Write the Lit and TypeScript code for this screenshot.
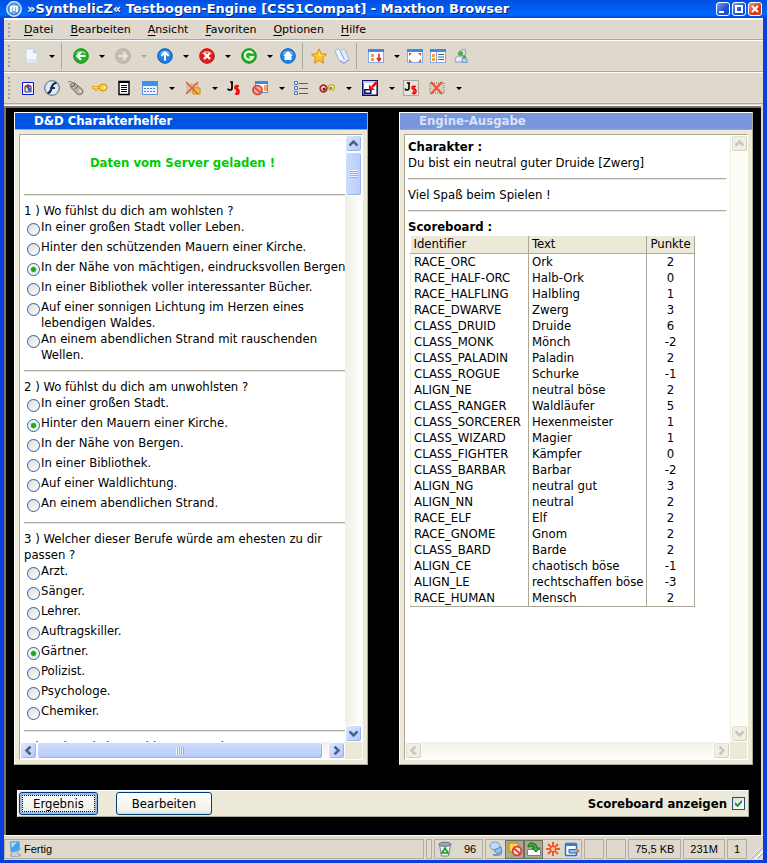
import { LitElement, html, css, svg, nothing } from "lit";
import { customElement, property, state } from "lit/decorators.js";
import { classMap } from "lit/directives/class-map.js";

const ICONS: Record<string, unknown> = {
  page: svg`<path d="M3 1h7l4 4v10H3z" fill="#f4f8fd" stroke="#c3d3ea"/><path d="M10 1v4h4z" fill="#b9cdec"/><path d="M4 11h9v4H4z" fill="#dde8f7"/>`,
  back: svg`<circle cx="8" cy="8" r="7.3" fill="#22b422" stroke="#168a1a"/><path d="M2.5 6a6 5 0 0 1 11 0q-5-2-11 0z" fill="#8be08b"/><path d="M12.5 8H4.500M8 4.200L4.200 8L8 11.800" fill="none" stroke="#fff" stroke-width="2"/>`,
  forward: svg`<circle cx="8" cy="8" r="7.3" fill="#c6bfb1" stroke="#b1aa9c"/><path d="M3.500 8h8M8 4.200L11.800 8L8 11.800" fill="none" stroke="#e9e5dc" stroke-width="2"/>`,
  up: svg`<circle cx="8" cy="8" r="7.3" fill="#1d7fe8" stroke="#1459b8"/><path d="M2.500 6a6 5 0 0 1 11 0q-5-2-11 0z" fill="#7db9f5"/><path d="M8 12.500V4.500M4.200 8L8 4.200L11.800 8" fill="none" stroke="#fff" stroke-width="2"/>`,
  stop: svg`<circle cx="8" cy="8" r="7.3" fill="#e31d1d" stroke="#b31313"/><path d="M2.500 6a6 5 0 0 1 11 0q-5-2-11 0z" fill="#f28a80"/><path d="M5 5l6 6M11 5l-6 6" stroke="#fff" stroke-width="2.400"/>`,
  refresh: svg`<circle cx="8" cy="8" r="7.3" fill="#22b422" stroke="#168a1a"/><path d="M2.500 6a6 5 0 0 1 11 0q-5-2-11 0z" fill="#7cdc7c"/><path d="M11.500 5.200A4.200 4.200 0 1 0 12 9H8.500" fill="none" stroke="#fff" stroke-width="2"/>`,
  home: svg`<circle cx="8" cy="8" r="7.3" fill="#1d85ea" stroke="#1260bd"/><path d="M2.500 6a6 5 0 0 1 11 0q-5-2-11 0z" fill="#86c2f8"/><path d="M8 3.200L13 8h-1.500v4h-7V8H3z" fill="#fff"/>`,
  star: svg`<path d="M8 .8l2.200 5 5.300.5-4 3.600 1.200 5.300L8 12.400l-4.700 2.800 1.200-5.300-4-3.600 5.300-.5z" fill="#ffc52a" stroke="#dc8a10"/><path d="M8 3l1.400 3.700 3 .3L8 8.500z" fill="#ffe98a"/>`,
  book: svg`<path d="M1 2.500l3.500-2 2 3 3-2.500 1.500 1 4 9.500-5 4-5-3z" fill="#e3edfa" stroke="#9cb5da"/><path d="M6.500 3.500l4 8M6 12.500l4 2.500 5-3.500" stroke="#7f9dcb" fill="none"/><path d="M3 3l4 8" stroke="#fff" stroke-width="1.500"/>`,
  sort: svg`<rect x=".5" y="1.500" width="15" height="13" fill="#fff" stroke="#88a9da"/><path d="M0 1h16v3H0z" fill="#3f87e8"/><path d="M3 6h3v3H3zM3 10h3v3H3z" fill="#f0a040"/><path d="M11 5.500V12M9 10l2 3 2-3" stroke="#d92020" stroke-width="1.500" fill="none"/>`,
  full: svg`<rect x=".5" y="1.500" width="15" height="13" fill="#fff" stroke="#88a9da"/><path d="M0 1h16v3H0z" fill="#3f87e8"/><path d="M2 5h3L2 8zM14 5h-3l3 3zM2 14h3l-3-3zM14 14h-3l3-3z" fill="#e04530"/>`,
  side: svg`<rect x=".5" y="1.500" width="15" height="13" fill="#fff" stroke="#88a9da"/><path d="M0 1h16v3H0z" fill="#3f87e8"/><path d="M2 6h3v3H2zM2 10h3v3H2z" fill="#f0a040"/><path d="M6.500 4v10" stroke="#7a9cd0"/><path d="M8 6.500h6M8 9h6M8 11.500h6" stroke="#4b5c78"/>`,
  people: svg`<path d="M5 6L8 2l4-1 1 5-3 2z" fill="#d4dbe6" stroke="#9aa7bb"/><circle cx="7.500" cy="5.500" r="2.600" fill="#54ad52"/><path d="M2 14q0-6 4-6t4 6z" fill="#e6eef8" stroke="#8ba1c1"/><path d="M9 14.500q0-5 2.500-5t3 5z" fill="#b7cdec" stroke="#7d98c4"/><circle cx="11.500" cy="9" r="1.800" fill="#4cab4f"/>`,
  frame: svg`<path d="M2.500 2.500h11v12h-11z" fill="#fff" stroke="#1010d8"/><path d="M5 6h6v6H5z" fill="#f8eaba" stroke="#333"/><path d="M5 6l3-2 3 2-3 3z" fill="#a02c78"/><path d="M8 8h3v3H8z" fill="#2869b6"/>`,
  flash: svg`<circle cx="8" cy="8" r="7.400" fill="#c9d5e2" stroke="#5b7390"/><circle cx="8" cy="8" r="5.900" fill="#e2ebf3"/><path d="M12.500 3Q8.500 3 7.500 8T3.500 13" fill="none" stroke="#142c4d" stroke-width="2.200"/><path d="M6.500 8H11" stroke="#142c4d" stroke-width="2"/>`,
  mouse: svg`<path d="M0 2q3-1.500 5 1" fill="none" stroke="#777"/><path d="M2 4.500l4-2 8 6.500q2 3 0 5-3 1.500-5 0L3 7.500z" fill="#b5b2a9" stroke="#79766e"/><path d="M3 7q4 0 4-4M7 9l3-3" fill="none" stroke="#65625c"/><path d="M11 10l2 2" stroke="#e5e2da" stroke-width="2"/>`,
  key: svg`<path d="M.5 6.500H8v2H5v2H3v-2H.5z" fill="#ffdc4a" stroke="#d59d16" stroke-width=".8"/><ellipse cx="11" cy="7.500" rx="4" ry="3.500" fill="#ffd23c" stroke="#c98f13"/><circle cx="12.500" cy="7.500" r="1" fill="#fff"/>`,
  text: svg`<path d="M3 1.500h10v13H3z" fill="#fff" stroke="#000" stroke-width="1.400"/><path d="M3 1h10v2H3z"/><path d="M5 5.500h6M5 7.500h6M5 9.500h6M5 11.500h6" stroke="#000"/>`,
  calendar: svg`<rect x=".5" y="1.500" width="15" height="13" fill="#e9f3ff" stroke="#5f96da"/><path d="M0 1h16v5H0z" fill="#3b92ea"/><path d="M2 8.500h12M2 11.500h12" stroke="#4c83c8" stroke-dasharray="2 1"/>`,
  nopic: svg`<path d="M2 4h11v8H2z" fill="#cbc7bd" stroke="#a6a298" stroke-dasharray="1 1"/><rect x="8" y="8" width="7" height="6" fill="#fbc338" stroke="#c58b18"/><path d="M1 2l12 12M13 2L1 14" stroke="#ef5a26" stroke-width="1.600"/>`,
  js: svg`<path d="M6 2v6q0 2-2 2T2 8.500M4 2h3" fill="none" stroke="#000" stroke-width="1.700"/><path d="M13 6q-4-1-4 1t2 2 2 3-4 1.500M11 5v10" fill="none" stroke="#f00" stroke-width="1.700"/>`,
  popup: svg`<rect x="3.500" y="1.500" width="12" height="11" fill="#fff" stroke="#5b8fda"/><path d="M3 1h13v3H3z" fill="#3f87e8"/><path d="M12 5h3v6h-3z" fill="#f7a54a"/><circle cx="5.500" cy="10" r="4.500" fill="#f1a39b" stroke="#d5402c" stroke-width="1.600"/><path d="M2.500 7.500l6 5" stroke="#d5402c" stroke-width="1.600"/>`,
  list: svg`<path d="M1.500 1.500h3v3h-3zM1.500 6.500h3v3h-3zM1.500 11.500h3v3h-3z" fill="#dce7f7" stroke="#5276b5"/><path d="M6 3.500h9M6 8.500h9M6 13.500h9" stroke="#4b5c80"/>`,
  glasses: svg`<circle cx="4.500" cy="8.500" r="3.300" fill="#eee" stroke="#b02424" stroke-width="1.800"/><circle cx="5" cy="9" r="1.500" fill="#522"/><circle cx="12.500" cy="7.500" r="2.800" fill="#f5f2c7" stroke="#c6bb32" stroke-width="1.500"/><circle cx="12" cy="8" r="1.200" fill="#775"/>`,
  shrink: svg`<path d="M.8.800h14.400v14.400H.8z" fill="#fff" stroke="#0b0b68" stroke-width="1.500"/><path d="M1 1h14v2H1z" fill="#b9cdec"/><path d="M2.800 9.800h6v3.500h-6z" fill="#fff" stroke="#0b0b68" stroke-width="1.500"/><path d="M15 2l-5 5" stroke="#f00" stroke-width="2.500"/><path d="M7 4.500V10h6z" fill="#f00"/>`,
  jsbox: svg`<path d="M.5.500h15v15H.5z" fill="#e8e4da" stroke="#aaa597"/><path d="M6 3v5q0 2-2 2T2.500 8.500M4 3h3" fill="none" stroke="#000" stroke-width="1.600"/><path d="M13 6.500q-4-1-4 1t2 1.500 2 2.500-4 1.500M11 5.500v9" fill="none" stroke="#f00" stroke-width="1.500"/>`,
  noimg: svg`<path d="M1 3h14v10H1z" fill="#d5d0c4" stroke="#77736b" stroke-dasharray="1 1"/><path d="M2 2l11 12M13 2L2 14" stroke="#f0502e" stroke-width="2"/>`,
  maxthon: svg`<circle cx="8" cy="8" r="7.200" fill="#3d85d8" stroke="#d8e8f8" stroke-width="1.500"/><circle cx="8" cy="8" r="5" fill="#72aeea"/><path d="M5 11V5.500h6V11M8 6v4" fill="none" stroke="#fff" stroke-width="1.700"/>`,
  computer: svg`<path d="M3 1l9-1 1 9-9 2z" fill="#3fa4f2" stroke="#8ca5c2"/><path d="M4 2l6-1-5 6z" fill="#a5dcff"/><path d="M5 11l5-1 1 3 3 1-4 2-7-1z" fill="#c9cfda" stroke="#8490a5" stroke-width=".7"/>`,
  bin: svg`<path d="M2.500 3.500h11l-2 11.500h-7z" fill="#eef4f8" stroke="#71808f"/><ellipse cx="8" cy="3.300" rx="6" ry="2" fill="#9fabb8" stroke="#5f6c7a"/><path d="M8 7l3 5H5z" fill="none" stroke="#179a1e" stroke-width="1.600"/>`,
  proxy: svg`<ellipse cx="7" cy="5" rx="5" ry="4" fill="#bcdcf7" stroke="#6b9bd0"/><path d="M6 9l7-3 1 5-5 2z" fill="#8fc0ef" stroke="#5684bd"/><path d="M5 13.500q5 2 9-1" fill="none" stroke="#6a8cb7" stroke-width="1.500"/>`,
  filter: svg`<path d="M2 2h9v9H2z" fill="#ffd143" stroke="#b98714"/><circle cx="10" cy="10" r="4.300" fill="#fbe7e1" stroke="#e03b23" stroke-width="1.800"/><path d="M7 7.500l6 5" stroke="#e03b23" stroke-width="1.800"/>`,
  photo: svg`<path d="M1.500 8.500h13v6h-13z" fill="#fff" stroke="#758092"/><path d="M2 6Q2 1 7 2q4 1 4 5h3l-4 4-4-4h2Q8 5 6 5z" fill="#35b231" stroke="#176b19"/>`,
  burst: svg`<path d="M8 1v14M1 8h14M3 3l10 10M13 3L3 13" stroke="#f0572a" stroke-width="2"/><circle cx="8" cy="8" r="2.500" fill="#ffd9a0" stroke="#e94820"/>`,
  edit: svg`<rect x="1.500" y="2.500" width="11" height="12" rx="1" fill="#fff" stroke="#2470cf" stroke-width="1.500"/><path d="M1 2h12v3H1z" fill="#2b80e5"/><path d="M5 8.500h7l3 1.500-3 2H5z" fill="#8cc3f5" stroke="#2b5fa8"/><path d="M12 8l3 2" stroke="#e9802b" stroke-width="2"/>`,
};

const icon = (name: string) =>
  html`<svg class="icon" viewBox="0 0 16 16" aria-hidden="true">${ICONS[name]}</svg>`;

interface Tool { icon?: string; label?: string; drop?: boolean; dim?: boolean; sep?: boolean }

const NAV: Tool[] = [
  { icon: "page", label: "Neu", drop: true }, { sep: true },
  { icon: "back", label: "Zurück", drop: true },
  { icon: "forward", label: "Vorwärts", drop: true, dim: true },
  { icon: "up", label: "Aufwärts", drop: true },
  { icon: "stop", label: "Stopp", drop: true },
  { icon: "refresh", label: "Aktualisieren", drop: true },
  { icon: "home", label: "Startseite" }, { sep: true },
  { icon: "star", label: "Favorit" }, { icon: "book", label: "Notizen" }, { sep: true },
  { icon: "sort", label: "Fenster", drop: true },
  { icon: "full", label: "Vollbild" }, { icon: "side", label: "Seitenleiste" }, { icon: "people", label: "Gruppen" },
];

const EXTRAS: Tool[] = [
  { icon: "frame", label: "Bilder" }, { icon: "flash", label: "Flash" }, { icon: "mouse", label: "Maus" },
  { icon: "key", label: "Passwörter" }, { icon: "text", label: "Quelltext" },
  { icon: "calendar", label: "Formulare", drop: true }, { icon: "nopic", label: "Inhalte sperren", drop: true },
  { icon: "js", label: "JavaScript" }, { icon: "popup", label: "Popups", drop: true },
  { icon: "list", label: "Liste" }, { icon: "glasses", label: "Ansehen", drop: true },
  { icon: "shrink", label: "Verkleinern", drop: true }, { icon: "jsbox", label: "Skripte" },
  { icon: "noimg", label: "Keine Bilder", drop: true },
];

const MENUS = ["Datei", "Bearbeiten", "Ansicht", "Favoriten", "Optionen", "Hilfe"];

const QUESTIONS = [
  { text: "Wo fühlst du dich am wohlsten ?", pick: 2, options: [
    "In einer großen Stadt voller Leben.", "Hinter den schützenden Mauern einer Kirche.",
    "In der Nähe von mächtigen, eindrucksvollen Bergen.", "In einer Bibliothek voller interessanter Bücher.",
    "Auf einer sonnigen Lichtung im Herzen eines lebendigen Waldes.",
    "An einem abendlichen Strand mit rauschenden Wellen."] },
  { text: "Wo fühlst du dich am unwohlsten ?", pick: 1, options: [
    "In einer großen Stadt.", "Hinter den Mauern einer Kirche.", "In der Nähe von Bergen.",
    "In einer Bibliothek.", "Auf einer Waldlichtung.", "An einem abendlichen Strand."] },
  { text: "Welcher dieser Berufe würde am ehesten zu dir passen ?", pick: 4, options: [
    "Arzt.", "Sänger.", "Lehrer.", "Auftragskiller.", "Gärtner.", "Polizist.", "Psychologe.", "Chemiker."] },
  { text: "Du hast keine Wahl, was tust du nun ?", pick: -1, options: [] as string[] },
];

const SCORES: [string, string, number][] = [
  ["RACE_ORC", "Ork", 2], ["RACE_HALF-ORC", "Halb-Ork", 0], ["RACE_HALFLING", "Halbling", 1],
  ["RACE_DWARVE", "Zwerg", 3], ["CLASS_DRUID", "Druide", 6], ["CLASS_MONK", "Mönch", -2],
  ["CLASS_PALADIN", "Paladin", 2], ["CLASS_ROGUE", "Schurke", -1], ["ALIGN_NE", "neutral böse", 2],
  ["CLASS_RANGER", "Waldläufer", 5], ["CLASS_SORCERER", "Hexenmeister", 1], ["CLASS_WIZARD", "Magier", 1],
  ["CLASS_FIGHTER", "Kämpfer", 0], ["CLASS_BARBAR", "Barbar", -2], ["ALIGN_NG", "neutral gut", 3],
  ["ALIGN_NN", "neutral", 2], ["RACE_ELF", "Elf", 2], ["RACE_GNOME", "Gnom", 2], ["CLASS_BARD", "Barde", 2],
  ["ALIGN_CE", "chaotisch böse", -1], ["ALIGN_LE", "rechtschaffen böse", -3], ["RACE_HUMAN", "Mensch", 2],
];

const shared = css`
  * { box-sizing: border-box; }
  button { font: inherit; color: inherit; padding: 0; border: 0; background: none; }
  .icon { display: block; width: 16px; height: 16px; flex: none; }
`;

@customElement("tool-strip")
export class ToolStrip extends LitElement {
  @property({ attribute: false }) tools: Tool[] = [];

  static styles = [shared, css`
    :host { display: flex; align-items: center; height: 100%; }
    .tool { display: flex; align-items: center; justify-content: center; width: var(--cell); height: 24px; }
    .group { display: flex; margin-left: var(--gap); }
    .drop { display: flex; align-items: center; justify-content: center; width: var(--drop); padding-left: 3px; }
    .arrow { width: 0; height: 0; border: 3px solid transparent; border-top-color: #000; border-bottom: 0; }
    .dim .arrow { border-top-color: #aaa496; }
    .sep { width: 1px; height: 26px; margin: 0 4px 0 3px; background: #aca899; }
  `];

  render() {
    return this.tools.map((t) => t.sep
      ? html`<span class="sep"></span>`
      : t.drop
        ? html`<span class=${classMap({ group: true, dim: !!t.dim })}>
            <button class="tool" aria-label=${t.label ?? ""}>${icon(t.icon!)}</button>
            <button class="drop" aria-label="${t.label} Auswahl"><span class="arrow"></span></button>
          </span>`
        : html`<button class="tool" aria-label=${t.label ?? ""}>${icon(t.icon!)}</button>`);
  }
}

@customElement("scroll-frame")
export class ScrollFrame extends LitElement {
  @property({ type: Boolean, reflect: true }) idle = false;

  static styles = [shared, css`
    :host {
      display: grid; grid-template: minmax(0, 1fr) 17px / minmax(0, 1fr) 17px;
      border: 1px solid #fff; border-top-color: #aca899; border-left-color: #aca899;
      background: #ece9d8; min-height: 0;
    }
    .view { background: #fff; overflow: hidden; padding: 4px 0 0 4px; }
    :host([idle]) .view { padding: 4px 4px 0 3px; }
    .bar { display: flex; background: linear-gradient(90deg, #f0efe8, #fefefb); }
    .vert { flex-direction: column; }
    .horiz { background: linear-gradient(#f0efe8, #fefefb); }
    .step, .thumb {
      display: flex; align-items: center; justify-content: center; flex: none;
      width: 17px; height: 17px; border: 1px solid #fff; border-radius: 3px;
      background: linear-gradient(135deg, #dbe6ff, #b4c8fb); box-shadow: inset -1px -1px #98b5e8;
    }
    .chev { width: 9px; height: 9px; fill: none; stroke: #4d6185; stroke-width: 2.5; }
    .vert .thumb { height: 44px; background: linear-gradient(90deg, #cddcfe, #b7cbfb); }
    .horiz .thumb { width: 286px; max-width: calc(100% - 34px); background: linear-gradient(#cddcfe, #b7cbfb); }
    .grip { width: 8px; height: 8px; background: repeating-linear-gradient(#eef4ff 0 1px, #8cb0f8 1px 2px); }
    .horiz .grip { background: repeating-linear-gradient(90deg, #eef4ff 0 1px, #8cb0f8 1px 2px); }
    .space { flex: 1; }
    :host([idle]) .step { background: #f0efe6; border-color: #fff; box-shadow: inset -1px -1px #d2cfc0, inset 1px 1px #e2e0d4; }
    :host([idle]) .chev { stroke: #c9c7ba; }
    :host([idle]) .vert { background: #fdfdf8; border-left: 1px solid #eeede5; }
  `];

  private step(label: string, d: string) {
    return html`<button class="step" aria-label=${label}><svg class="chev" viewBox="0 0 9 9"><path d=${d} /></svg></button>`;
  }

  private get thumb() {
    return this.idle ? nothing : html`<span class="thumb"><span class="grip"></span></span>`;
  }

  render() {
    return html`
      <div class="view"><slot></slot></div>
      <div class="bar vert">${this.step("Nach oben", "M.5 6.500l4-4 4 4")}${this.thumb}<span class="space"></span>${this.step("Nach unten", "M.5 2.500l4 4 4-4")}</div>
      <div class="bar horiz">${this.step("Nach links", "M6.500.5l-4 4 4 4")}${this.thumb}<span class="space"></span>${this.step("Nach rechts", "M2.500.5l4 4-4 4")}</div>`;
  }
}

@customElement("app-root")
export class AppRoot extends LitElement {
  @state() private picks = QUESTIONS.map((q) => q.pick);
  @state() private showScores = true;

  static styles = [shared, css`
    :host {
      --ui: "DejaVu Sans Condensed", "DejaVu Sans", sans-serif;
      display: flex; flex-direction: column; height: 100vh; color: #000;
      font: 13px/16px var(--ui);
      border: solid #0a3fdc; border-width: 0 4px 3px;
      background: #dfd8cc;
      box-sizing: border-box;
    }
    .title {
      display: flex; align-items: center; gap: 5px; flex: none; height: 18px;
      margin: 0 -4px; padding: 0 5px 1px 6px;
      background: linear-gradient(#0050e0, #0066ff 80%, #0048d8); color: #fff;
    }
    .title h1 { flex: 1; margin: 0; font: bold 13px/16px "DejaVu Sans", sans-serif; text-shadow: 1px 1px #0a1f80; white-space: nowrap; }
    .caption { display: flex; gap: 2px; }
    .cap { display: flex; align-items: center; justify-content: center; width: 14px; height: 14px; border: 1px solid #fff; border-radius: 3px; background: linear-gradient(135deg, #7e9ff0, #1c4ed2 60%); }
    .cap.close { background: linear-gradient(135deg, #f09b80, #d53c14 60%); }
    .cap svg { width: 10px; height: 10px; fill: none; stroke: #fff; stroke-width: 2; }
    .band { display: flex; align-items: center; flex: none; height: 32px; border-top: 1px solid #fff; border-bottom: 1px solid #aca899; padding-left: 4px; }
    .menu { height: 22px; border-top: 2px solid #fff; }
    .nav { --cell: 23px; --drop: 16px; --gap: 3px; }
    .extra { --cell: 24px; --drop: 17px; --gap: 2px; }
    .grip { width: 2px; height: 23px; background: repeating-linear-gradient(#aaa597 0 2px, transparent 2px 4px); }
    .menu .grip { height: 14px; }
    .band tool-strip { margin-left: 6px; }
    nav { display: flex; gap: 17px; margin-left: 14px; font: 11px/16px "DejaVu Sans", sans-serif; }
    nav u { text-underline-offset: 2px; }
    .stage {
      display: flex; flex-direction: column; flex: 1; min-height: 0; background: #000;
      border: 2px solid #77746a; border-width: 2px 0 0 2px; box-shadow: 0 -1px #fff;
      margin: 2px 2px 0 0; padding: 4px 8px 18px;
    }
    .panels { display: grid; grid-template-columns: 1fr 1fr; gap: 31px; flex: 1; min-height: 0; grid-template-rows: minmax(0, 1fr); }
    .panel {
      display: flex; flex-direction: column; min-width: 0; background: #ece9d8;
      border: 1px solid #fff; border-right-color: #aca899; border-bottom-color: #aca899;
    }
    .panel h2 { flex: none; margin: 0; height: 17px; padding-left: 19px; background: #0054e3; color: #fff; font: bold 13px/16px var(--ui); border-bottom: 1px solid #aca899; }
    .panel.quiet h2 { background: #7a96df; color: #d8e4f8; }
    .panel scroll-frame { flex: 1; margin: 4px; }
    .notice { margin: 0; padding: 16px 4px 16px 0; text-align: center; font-weight: bold; color: #0c0; }
    hr { margin: 7px 0; height: 2px; border: 0; border-top: 1px solid #aca899; background: #ece9d8; }
    fieldset { margin: 0; padding: 0; border: 0; min-width: 0; }
    legend { padding: 0; }
    .option { display: flex; min-height: 20px; margin-right: -6px; padding-left: 3px; gap: 1px; }
    input[type="radio"] {
      appearance: none; flex: none; width: 13px; height: 13px; margin: 4px 0 0; border: 1px solid #32608f; border-radius: 50%;
      background: linear-gradient(135deg, #dcdcd7, #fff);
    }
    input[type="radio"]:checked { background: radial-gradient(circle, #22a322 0 2px, #c4e6c4 3px, #f4f4f1 4px); }
    p { margin: 0; }
    table { border-collapse: collapse; margin: 1px 0 0 2px; }
    th { font-weight: normal; text-align: left; background: #ece9d8; height: 17px; border-bottom: 1px solid #aca899; }
    th, td { padding: 0 2px 0 3px; border-right: 1px solid #aca899; white-space: nowrap; }
    td { height: 16px; border-left: 1px solid #ece9d8; }
    tbody tr:last-child td { border-bottom: 1px solid #aca899; }
    th:nth-child(1), th:nth-child(2) { width: 118px; }
    th:nth-child(3) { width: 48px; }
    th:nth-child(3), td:nth-child(3) { padding: 0 2px; text-align: center; }
    .actions {
      display: flex; align-items: center; flex: none; height: 27px; margin: 25px 4px 0 3px; padding: 0 3px 0 1px;
      background: #ece9d8; border: 1px solid #aca899; border-top-color: #fff; border-left-color: #fff;
    }
    .push { height: 23px; border: 1px solid #003c74; border-radius: 3px; background: linear-gradient(#fff, #f0f0ea 85%, #dcd8cc); }
    .push + .push { margin-left: 18px; padding: 0 15px; }
    .push.default { box-shadow: inset 0 0 0 2px #9db9eb; padding: 0 2px; }
    .push.default span { display: block; padding: 0 10px; border: 1px dotted #000; line-height: 15px; }
    .check { display: flex; align-items: center; gap: 5px; margin-left: auto; font-weight: bold; }
    input[type="checkbox"] { appearance: none; width: 13px; height: 13px; margin: 0; border: 1px solid #1c5180; background: linear-gradient(135deg, #dcdcd7, #fff); }
    input[type="checkbox"]:checked::before { content: ""; display: block; width: 11px; height: 11px; background: #21a121; clip-path: polygon(18% 36%, 42% 56%, 82% 14%, 82% 42%, 42% 84%, 18% 62%); }
    .status { display: flex; gap: 2px; flex: none; height: 25px; padding: 3px 0 1px; border-top: 1px solid #fff; font: 11px/16px "Liberation Sans", sans-serif; }
    .cell { display: flex; align-items: center; justify-content: center; border: 1px solid #b3ad9f; padding: 0 6px; }
    .cell.main { flex: 1; justify-content: flex-start; gap: 1px; padding: 0 2px; }
    .cell.slim { width: 6px; padding: 0; }
    .cell.blank { width: 20px; padding: 0; }
    .cell.count { gap: 11px; padding: 0 6px 0 2px; }
    .cell.icons { padding: 0; }
    .flag { display: flex; align-items: center; justify-content: center; width: 19px; height: 19px; }
    .flag.on { background: #a9a892; border: 1px solid #6f6d5c; }
    .size { width: 14px; align-self: end; height: 14px; background: repeating-linear-gradient(135deg, transparent 0 2px, #fff 2px 3px, #a39d8f 3px 4px); clip-path: polygon(100% 0, 100% 100%, 0 100%); }
  `];

  private pick(q: number, o: number) {
    this.picks = this.picks.map((p, i) => (i === q ? o : p));
  }

  private question(q: (typeof QUESTIONS)[number], i: number) {
    return html`<hr />
      <fieldset>
        <legend>${`${i + 1} ) ${q.text}`}</legend>
        ${q.options.map((text, o) => html`<label class="option">
          <input type="radio" name="q${i}" .checked=${this.picks[i] === o} @change=${() => this.pick(i, o)} />
          <span>${text}</span></label>`)}
      </fieldset>`;
  }

  render() {
    return html`
      <header class="title">
        ${icon("maxthon")}
        <h1>»SynthelicZ« Testbogen-Engine [CSS1Compat] - Maxthon Browser</h1>
        <div class="caption">
          <button class="cap" aria-label="Minimieren"><svg viewBox="0 0 10 10"><path d="M1 8h5" /></svg></button>
          <button class="cap" aria-label="Maximieren"><svg viewBox="0 0 10 10"><path d="M2 2h6v6H2z" /></svg></button>
          <button class="cap close" aria-label="Schließen"><svg viewBox="0 0 10 10"><path d="M2 2l6 6M8 2L2 8" /></svg></button>
        </div>
      </header>
      <div class="band menu"><span class="grip"></span>
        <nav>${MENUS.map((m) => html`<button><u>${m[0]}</u>${m.slice(1)}</button>`)}</nav>
      </div>
      <div class="band nav"><span class="grip"></span><tool-strip .tools=${NAV}></tool-strip></div>
      <div class="band extra"><span class="grip"></span><tool-strip .tools=${EXTRAS}></tool-strip></div>
      <main class="stage">
        <div class="panels">
          <section class="panel">
            <h2>D&amp;D Charakterhelfer</h2>
            <scroll-frame>
              <p class="notice">Daten vom Server geladen !</p>
              ${QUESTIONS.map((q, i) => this.question(q, i))}
            </scroll-frame>
          </section>
          <section class="panel quiet">
            <h2>Engine-Ausgabe</h2>
            <scroll-frame idle>
              <p><b>Charakter :</b></p>
              <p>Du bist ein neutral guter Druide [Zwerg]</p>
              <hr />
              <p>Viel Spaß beim Spielen !</p>
              <hr />
              ${this.showScores ? html`<p><b>Scoreboard :</b></p>
                <table>
                  <thead><tr><th>Identifier</th><th>Text</th><th>Punkte</th></tr></thead>
                  <tbody>${SCORES.map((r) => html`<tr>${r.map((c) => html`<td>${c}</td>`)}</tr>`)}</tbody>
                </table>` : nothing}
            </scroll-frame>
          </section>
        </div>
        <div class="actions">
          <button class="push default"><span>Ergebnis</span></button>
          <button class="push">Bearbeiten</button>
          <label class="check">Scoreboard anzeigen
            <input type="checkbox" .checked=${this.showScores}
              @change=${(e: Event) => (this.showScores = (e.target as HTMLInputElement).checked)} />
          </label>
        </div>
      </main>
      <footer class="status">
        <div class="cell main">${icon("computer")}<span>Fertig</span></div>
        <div class="cell slim"></div>
        <div class="cell count">${icon("bin")}<span>96</span></div>
        <div class="cell icons">
          ${["proxy", "filter", "photo", "burst", "edit"].map((n, i) => html`<span class=${classMap({ flag: true, on: i === 1 || i === 2 })}>${icon(n)}</span>`)}
        </div>
        <div class="cell blank"></div>
        <div class="cell blank"></div>
        <div class="cell">75,5 KB</div>
        <div class="cell">231M</div>
        <div class="cell">1</div>
        <span class="size"></span>
      </footer>`;
  }
}
